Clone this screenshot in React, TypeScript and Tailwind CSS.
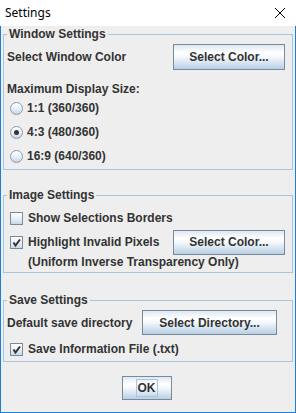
import type { ReactNode } from 'react';

const btnBg =
  'bg-[linear-gradient(to_bottom,#dde8f3_0%,#ffffff_32%,#f4f8fc_50%,#b8cfe5_100%)] border border-[#7a8a99]';

function Button({ label, className = '' }: { label: string; className?: string }) {
  return (
    <div className={`h-[25px] flex items-center justify-center ${btnBg} ${className}`}>
      <span className="font-bold">{label}</span>
    </div>
  );
}

function Radio({ checked, label }: { checked?: boolean; label: string }) {
  return (
    <div className="h-[24px] flex items-center pl-[6px]">
      <div className="w-[13px] h-[13px] rounded-full border border-[#8b9cac] bg-[linear-gradient(to_bottom,#ffffff_0%,#e4ecf4_60%,#c4d4e4_100%)] flex items-center justify-center">
        {checked && <div className="w-[5px] h-[5px] rounded-full bg-[#333333]" />}
      </div>
      <span className="ml-[4px] font-bold">{label}</span>
    </div>
  );
}

function Check({ checked, label }: { checked?: boolean; label: string }) {
  return (
    <div className="flex items-center pl-[6px]">
      <div className="w-[13px] h-[13px] border border-[#7a8a99] bg-[linear-gradient(to_bottom,#ffffff_0%,#e6eef6_55%,#c8d8e8_100%)] flex items-center justify-center">
        {checked && (
          <svg width="11" height="11" viewBox="0 0 11 11">
            <polyline points="2.5,5.5 4.5,8.5 9,2.5" fill="none" stroke="#333333" strokeWidth="2" />
          </svg>
        )}
      </div>
      <span className="ml-[5px] font-bold">{label}</span>
    </div>
  );
}

function Group({ title, className = '', children }: { title: string; className?: string; children: ReactNode }) {
  return (
    <fieldset className={`mx-[2px] border border-[#a8c5e2] ${className}`}>
      <legend className="ml-[3px] px-[2px] h-[14px] leading-[14px] font-bold">{title}</legend>
      {children}
    </fieldset>
  );
}

export default function App() {
  return (
    <div
      className="w-[296px] h-[413px] flex flex-col text-[12px] text-[#333333]"
      style={{ fontFamily: '"Liberation Sans", Arial, sans-serif' }}
    >
      <div className="h-[26px] bg-white flex items-center justify-between pl-[5px] pr-[11px]">
        <span className="text-[12px] text-black" style={{ fontFamily: '"Noto Sans", "Open Sans", sans-serif' }}>
          Settings
        </span>
        <svg width="10" height="10" viewBox="0 0 10 10">
          <path d="M0 0L10 10M10 0L0 10" stroke="#000000" strokeWidth="1" />
        </svg>
      </div>

      <div className="flex-1 flex flex-col bg-[#eeeeee] border-l border-r border-b border-[#1c7fd6]">
        <Group title="Window Settings" className="mt-[1px] pb-[1px]">
          <div className="mt-[3px] h-[26px] flex items-center pl-[3px] pr-[7px]">
            <span className="font-bold">Select Window Color</span>
            <Button label="Select Color..." className="ml-auto w-[112px] h-[26px]" />
          </div>
          <div className="mt-[12px] h-[14px] leading-[14px] pl-[3px] font-bold">Maximum Display Size:</div>
          <Radio label="1:1 (360/360)" />
          <Radio checked label="4:3 (480/360)" />
          <Radio label="16:9 (640/360)" />
        </Group>

        <Group title="Image Settings" className="mt-[18px] pb-[2px]">
          <div className="mt-[4px] h-[24px] flex items-center">
            <Check label="Show Selections Borders" />
          </div>
          <div className="h-[24px] flex items-center pr-[7px]">
            <Check checked label="Highlight Invalid Pixels" />
            <Button label="Select Color..." className="ml-auto w-[112px]" />
          </div>
          <div className="h-[16px] flex items-center pl-[24px] font-bold">(Uniform Inverse Transparency Only)</div>
        </Group>

        <Group title="Save Settings" className="mt-[20px]">
          <div className="mt-[3px] h-[25px] flex items-center pl-[3px] pr-[15px]">
            <span className="font-bold">Default save directory</span>
            <Button label="Select Directory..." className="ml-auto w-[135px]" />
          </div>
          <div className="mt-[2px] h-[24px] flex items-center">
            <Check checked label="Save Information File (.txt)" />
          </div>
        </Group>

        <div className="mt-[14px] flex justify-center pr-[3px]">
          <div className={`w-[50px] h-[24px] flex items-center justify-center ${btnBg}`}>
            <span className="h-[18px] leading-[16px] px-[1px] border border-[#a8c5e2] font-bold">OK</span>
          </div>
        </div>
      </div>
    </div>
  );
}
